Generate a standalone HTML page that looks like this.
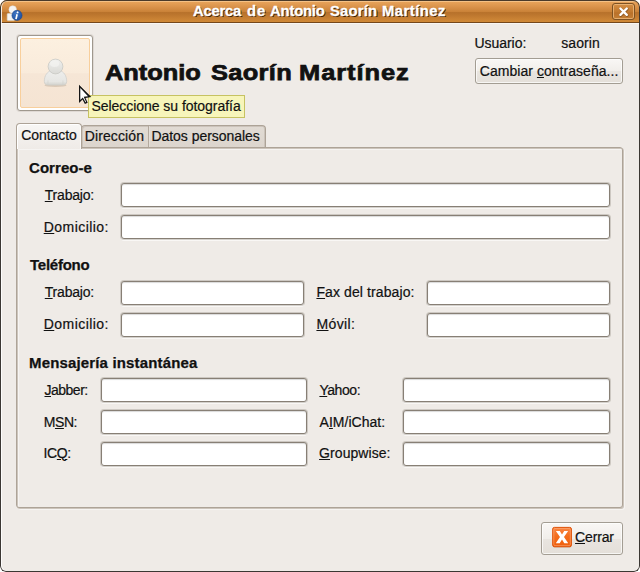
<!DOCTYPE html>
<html><head><meta charset="utf-8">
<style>
html,body{margin:0;padding:0;background:#fff;}
body{width:640px;height:572px;position:relative;overflow:hidden;font-family:"Liberation Sans",sans-serif;font-size:14px;color:#1a1a1a;}
.abs{position:absolute;}
#win{position:absolute;left:0;top:0;width:640px;height:572px;border-radius:7px 7px 6px 6px;background:#efebe7;overflow:hidden;}
#frame{position:absolute;left:0;top:0;width:638px;height:570px;border:1px solid #3b3733;border-top-color:#4a3a2a;border-radius:7px 7px 6px 6px;z-index:20;box-shadow:inset 1px 0 0 rgba(255,255,255,.85);}
#title{position:absolute;left:0;top:0;width:640px;height:22px;border-bottom:1px solid #74471a;
 background:linear-gradient(to bottom,#5d452c 0,#5d452c 1px,#f6c58b 1px,#f3bd80 2px,#e6a158 2.4px,#d9924a 7px,#c98137 12px,#b8722b 12.2px,#ba742d 14px,#c67f33 18px,#d08937 22px);}

.lbl{position:absolute;white-space:nowrap;line-height:16px;font-size:14px;color:#111;-webkit-text-stroke:0.2px #111;}
.b{font-weight:bold;color:#111;-webkit-text-stroke:0.25px #111;}
.t{color:#fff;-webkit-text-stroke:0.3px #fff;font-weight:bold;text-shadow:1px 1px 0.5px rgba(55,25,0,.95);z-index:3;}
.h{-webkit-text-stroke:0.75px #111;}
.z{z-index:6;}
u{text-decoration:underline;text-underline-offset:0.8px;text-decoration-thickness:1px;}
.inp{position:absolute;height:22px;border:1px solid #877f75;border-radius:3px;background:#fff;box-shadow:inset 0 1px 1px rgba(0,0,0,.15), 0 0 0 1px rgba(110,100,90,.26), 0 2px 0 rgba(255,255,255,.6);}
.btn{position:absolute;border:1px solid #a39d93;border-radius:3px;background:linear-gradient(#f9f7f5 0%,#f1eeea 50%,#e9e5e0 51%,#e4dfd9 100%);box-shadow:inset 0 0 0 1px rgba(255,255,255,.7);box-sizing:border-box;}
</style></head><body>
<div id="win">
 <div id="title">

  <svg class="abs" style="left:5px;top:3.7px;" width="20" height="18" viewBox="0 0 20 18">
   <defs><radialGradient id="bl" cx="40%" cy="35%" r="70%"><stop offset="0" stop-color="#3f76c4"/><stop offset="1" stop-color="#1d4f9e"/></radialGradient></defs>
   <rect x="2.2" y="9.6" width="7.4" height="7" rx="0.8" fill="#f4f3f0" stroke="#d9d6d0" stroke-width="0.6"/>
   <circle cx="7.7" cy="5.5" r="3.8" fill="#f6f5f3" stroke="#dcd9d4" stroke-width="0.5"/>
   <circle cx="12" cy="11.4" r="5.1" fill="url(#bl)" stroke="#1a478f" stroke-width="0.5"/>
   <path d="M12.9 7.6 l-0.6 1.7 M12.1 10.3 L11 15.1" stroke="#fff" stroke-width="1.7" stroke-linecap="butt" fill="none"/>
  </svg>
  <div class="abs" style="left:612px;top:3px;width:23px;height:17px;box-sizing:border-box;border:1px solid #7d5223;border-radius:3px;background:linear-gradient(#d48e44 0%,#c27a30 50%,#b9712a 60%,#c58036 100%);box-shadow:inset 0 0 0 1px rgba(240,190,130,.75);"></div>
  <svg class="abs" style="left:618px;top:6px;" width="12" height="12" viewBox="0 0 12 12">
   <path d="M2.4 2.5 L8.8 8.9 M8.8 2.5 L2.4 8.9" stroke="#6b431a" stroke-opacity=".55" stroke-width="2.9" stroke-linecap="round" transform="translate(0.4,0.6)"/>
   <path d="M2.4 2.5 L8.8 8.9 M8.8 2.5 L2.4 8.9" stroke="#fff" stroke-width="2.3" stroke-linecap="round"/>
  </svg>
 </div>
 <div class="abs" style="left:1px;top:23px;width:638px;height:1px;background:rgba(255,255,255,.55);"></div>
 <div class="abs" style="left:17px;top:35px;width:76px;height:76px;box-sizing:border-box;border:1px solid #9f988e;border-radius:3px;background:#fff;box-shadow:0 0 0 1px rgba(150,138,125,.18);"></div>
 <div class="abs" style="left:20px;top:38px;width:70px;height:70px;box-sizing:border-box;border:1px solid #f8cf9c;border-radius:2px;background:linear-gradient(#fcf0e0 0%,#f9ebdb 50%,#f6e6d6 51%,#f5e4d3 100%);"></div>


 <svg class="abs" style="left:40px;top:56px;" width="32" height="34" viewBox="0 0 32 34">
  <defs>
   <linearGradient id="hd" x1="0" y1="0" x2="0" y2="1"><stop offset="0" stop-color="#f0f0ee"/><stop offset="1" stop-color="#dadad6"/></linearGradient>
   <linearGradient id="bd" x1="0" y1="0" x2="0" y2="1"><stop offset="0" stop-color="#eeeeec"/><stop offset=".75" stop-color="#e6e6e3"/><stop offset="1" stop-color="#d2d2cd"/></linearGradient>
  </defs>
  <ellipse cx="15.5" cy="29.3" rx="11" ry="1.7" fill="#bfae9a" opacity=".5"/>
  <path d="M4.3 25.3 C4.3 19.5 7.5 15.6 11 14.6 L20 14.6 C23.5 15.6 26.7 19.5 26.7 25.3 C26.7 27.9 25.2 29.1 22.8 29.1 L8.2 29.1 C5.8 29.1 4.3 27.9 4.3 25.3 Z" fill="url(#bd)" stroke="#cdcdc8" stroke-width="0.7"/>
  <path d="M8 24.6 L8 28.4 M23 24.6 L23 28.4" stroke="#d2d2cd" stroke-width="0.7"/>
  <circle cx="15.5" cy="10.5" r="7.4" fill="url(#hd)" stroke="#c9c9c4" stroke-width="0.8"/>
  <ellipse cx="14.6" cy="7.6" rx="4.6" ry="3.4" fill="#f3f3f1" opacity=".7"/>
 </svg>
 <svg class="abs" style="left:78px;top:84px;z-index:8;" width="16" height="22" viewBox="0 0 16 22">
  <path d="M1.0 0.8 L1.0 18.9 L4.5 15.5 L6.9 19.9 L9.7 18.7 L7.5 13.9 L13.3 13.1 Z" fill="#151515"/>
  <path d="M2.3 3.9 L2.3 16 L4.85 13.5 L7.45 18.2 L8.1 17.9 L5.7 12.8 L10 12.25 Z" fill="#fff"/>
 </svg>
 <div class="btn" style="left:475px;top:58px;width:148px;height:26px;"></div>
 <div class="btn" style="left:541px;top:522px;width:82px;height:33px;"></div>
 <svg class="abs" style="left:551px;top:526px;" width="22" height="23" viewBox="0 0 22 23">
  <defs><linearGradient id="og" x1="0" y1="0" x2="0" y2="1"><stop offset="0" stop-color="#f98746"/><stop offset=".45" stop-color="#f46d1c"/><stop offset="1" stop-color="#ef5f0c"/></linearGradient></defs>
  <rect x="1.9" y="2.3" width="18.8" height="19.4" rx="2.2" fill="#b9a592" opacity=".55"/>
  <rect x="1.7" y="1.4" width="18.7" height="19.3" rx="1.6" fill="url(#og)" stroke="#df5208" stroke-width="1"/>
  <rect x="2.8" y="2.5" width="16.5" height="17.1" rx="1.2" fill="none" stroke="#fbaa78" stroke-width="0.8" opacity=".75"/>
  <path d="M4.9 4.9 L8.8 4.9 L11 8.6 L13.2 4.9 L17.1 4.9 L13 11 L17.2 17.3 L13.3 17.3 L11 13.5 L8.7 17.3 L4.8 17.3 L9 11 Z" fill="#fff"/>
 </svg>
 <div class="abs" style="left:88px;top:95px;width:157px;height:23px;box-sizing:border-box;border:1px solid #c6c262;background:#f7f5ba;z-index:5;"></div>
 <!-- tabs -->
 <div class="abs" style="left:81px;top:125px;width:185px;height:23px;box-sizing:border-box;border:1px solid #ada397;border-bottom:none;border-radius:4px 4px 0 0;background:linear-gradient(#e1dbd4,#dcd5cd);box-shadow:inset 1px 1px 0 rgba(198,189,180,.8), inset -1px 0 0 rgba(198,189,180,.8);"></div>
 <div class="abs" style="left:148px;top:126px;width:1px;height:22px;background:#b3a99e;box-shadow:1px 0 0 rgba(230,225,219,.7);"></div>
 <div class="abs" id="panel" style="left:16px;top:147px;width:607px;height:361px;box-sizing:border-box;border:1px solid #ada397;border-radius:0 3px 3px 3px;background:#efebe7;box-shadow:inset 1px 1px 0 rgba(196,187,178,.85), inset 2px 2px 0 rgba(255,255,255,.45), 1px 1px 0 rgba(196,187,178,.85), 2px 2px 0 rgba(255,255,255,.45);"></div>
 <div class="abs" style="left:16px;top:123px;width:66px;height:26px;box-sizing:border-box;border:1px solid #ada397;border-bottom:none;border-radius:4px 4px 0 0;background:linear-gradient(#f8f7f5 0%,#f3f0ed 50%,#efebe7 100%);box-shadow:inset 1px 1px 0 #fff, inset -1px 0 0 rgba(255,255,255,.7);"></div>

 <div class="lbl t" id="l_t1" style="left:192.60px;top:2.75px;font-size:14px;line-height:16px;letter-spacing:-0.230px;transform:scaleX(1.06);transform-origin:0 0;">Acerca</div>
 <div class="lbl t" id="l_t2" style="left:247.22px;top:2.75px;font-size:14px;line-height:16px;letter-spacing:0.784px;transform:scaleX(1.06);transform-origin:0 0;">de</div>
 <div class="lbl t" id="l_t3" style="left:269.78px;top:2.75px;font-size:14px;line-height:16px;letter-spacing:-0.188px;transform:scaleX(1.06);transform-origin:0 0;">Antonio</div>
 <div class="lbl t" id="l_t4" style="left:330.34px;top:2.75px;font-size:14px;line-height:16px;letter-spacing:0.188px;transform:scaleX(1.06);transform-origin:0 0;">Saorín</div>
 <div class="lbl t" id="l_t5" style="left:382.05px;top:2.75px;font-size:14px;line-height:16px;letter-spacing:0.443px;transform:scaleX(1.06);transform-origin:0 0;">Martínez</div>
 <div class="lbl b h" id="l_h1" style="left:105.00px;top:60.37px;font-size:22.3px;line-height:26px;letter-spacing:-0.024px;transform:scaleX(1.14);transform-origin:0 0;">Antonio</div>
 <div class="lbl b h" id="l_h2" style="left:210.87px;top:60.37px;font-size:22.3px;line-height:26px;letter-spacing:0.280px;transform:scaleX(1.14);transform-origin:0 0;">Saorín</div>
 <div class="lbl b h" id="l_h3" style="left:299.36px;top:60.37px;font-size:22.3px;line-height:26px;letter-spacing:0.836px;transform:scaleX(1.14);transform-origin:0 0;">Martínez</div>
 <div class="lbl " id="l_usuario" style="left:474.43px;top:34.75px;font-size:14px;line-height:16px;letter-spacing:-0.038px;">Usuario:</div>
 <div class="lbl " id="l_saorin" style="left:561.14px;top:34.75px;font-size:14px;line-height:16px;letter-spacing:0.116px;">saorin</div>
 <div class="lbl " id="l_cambiar" style="left:479.86px;top:62.75px;font-size:14px;line-height:16px;letter-spacing:0.034px;">Cambiar <u>c</u>ontraseña...</div>
 <div class="lbl z" id="l_tooltip" style="left:91.42px;top:98.25px;font-size:14px;line-height:16px;letter-spacing:-0.040px;">Seleccione su fotografía</div>
 <div class="lbl " id="l_contacto" style="left:21.27px;top:126.75px;font-size:14px;line-height:16px;letter-spacing:-0.060px;">Contacto</div>
 <div class="lbl " id="l_direccion" style="left:84.71px;top:127.75px;font-size:14px;line-height:16px;letter-spacing:0.118px;">Dirección</div>
 <div class="lbl " id="l_datos" style="left:151.43px;top:127.75px;font-size:14px;line-height:16px;letter-spacing:-0.039px;">Datos personales</div>
 <div class="lbl b" id="l_correo" style="left:29.38px;top:159.75px;font-size:14px;line-height:16px;letter-spacing:0.067px;transform:scaleX(1.07);transform-origin:0 0;">Correo-e</div>
 <div class="lbl " id="l_trab1" style="left:44.77px;top:186.75px;font-size:14px;line-height:16px;letter-spacing:-0.200px;"><u>T</u>rabajo:</div>
 <div class="lbl " id="l_dom1" style="left:43.71px;top:218.75px;font-size:14px;line-height:16px;letter-spacing:0.457px;"><u>D</u>omicilio:</div>
 <div class="lbl b" id="l_tel" style="left:29.94px;top:256.75px;font-size:14px;line-height:16px;letter-spacing:-0.228px;transform:scaleX(1.07);transform-origin:0 0;">Teléfono</div>
 <div class="lbl " id="l_trab2" style="left:44.77px;top:283.75px;font-size:14px;line-height:16px;letter-spacing:-0.200px;"><u>T</u>rabajo:</div>
 <div class="lbl " id="l_fax" style="left:316.43px;top:283.75px;font-size:14px;line-height:16px;letter-spacing:0.101px;"><u>F</u>ax del trabajo:</div>
 <div class="lbl " id="l_dom2" style="left:43.71px;top:315.75px;font-size:14px;line-height:16px;letter-spacing:0.457px;"><u>D</u>omicilio:</div>
 <div class="lbl " id="l_movil" style="left:316.43px;top:315.75px;font-size:14px;line-height:16px;letter-spacing:0.402px;"><u>M</u>óvil:</div>
 <div class="lbl b" id="l_mens" style="left:28.64px;top:354.75px;font-size:14px;line-height:16px;letter-spacing:0.155px;transform:scaleX(1.07);transform-origin:0 0;">Mensajería instantánea</div>
 <div class="lbl " id="l_jabber" style="left:44.49px;top:381.75px;font-size:14px;line-height:16px;letter-spacing:-0.498px;"><u>J</u>abber:</div>
 <div class="lbl " id="l_yahoo" style="left:319.41px;top:381.75px;font-size:14px;line-height:16px;letter-spacing:-0.445px;"><u>Y</u>ahoo:</div>
 <div class="lbl " id="l_msn" style="left:43.71px;top:413.75px;font-size:14px;line-height:16px;letter-spacing:-0.413px;">M<u>S</u>N:</div>
 <div class="lbl " id="l_aim" style="left:319.59px;top:413.75px;font-size:14px;line-height:16px;letter-spacing:0.017px;">A<u>I</u>M/iChat:</div>
 <div class="lbl " id="l_icq" style="left:43.58px;top:444.75px;font-size:14px;line-height:16px;letter-spacing:-0.380px;">IC<u>Q</u>:</div>
 <div class="lbl " id="l_group" style="left:319.10px;top:444.75px;font-size:14px;line-height:16px;letter-spacing:0.065px;"><u>G</u>roupwise:</div>
 <div class="lbl " id="l_cerrar" style="left:575.06px;top:528.75px;font-size:14px;line-height:16px;letter-spacing:-0.143px;"><u>C</u>errar</div>
<div class="inp" style="left:121px;top:183px;width:487px;"></div>
<div class="inp" style="left:121px;top:215px;width:487px;"></div>
<div class="inp" style="left:121px;top:281px;width:181px;"></div>
<div class="inp" style="left:427px;top:281px;width:181px;"></div>
<div class="inp" style="left:121px;top:313px;width:181px;"></div>
<div class="inp" style="left:427px;top:313px;width:181px;"></div>
<div class="inp" style="left:101px;top:378px;width:204px;"></div>
<div class="inp" style="left:403px;top:378px;width:205px;"></div>
<div class="inp" style="left:101px;top:410px;width:204px;"></div>
<div class="inp" style="left:403px;top:410px;width:205px;"></div>
<div class="inp" style="left:101px;top:442px;width:204px;"></div>
<div class="inp" style="left:403px;top:442px;width:205px;"></div>

 <div id="frame"></div>
</div>
</body></html>
